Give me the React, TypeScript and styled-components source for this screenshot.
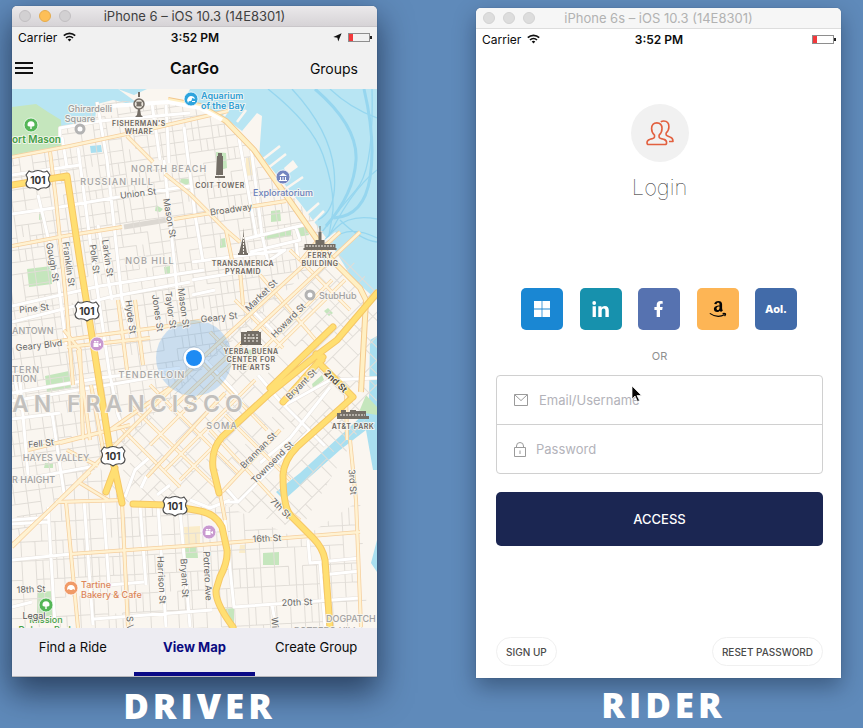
import React from 'react';
import styled, { createGlobalStyle, css } from 'styled-components';

const GlobalStyle = createGlobalStyle`
  * { box-sizing: border-box; }
  html { min-height: 100%; background: #5f8aba; }
  body { margin: 0; font-family: Inter, "Liberation Sans", sans-serif; color: #0c0c0c; }
  button, input { font-family: inherit; }
  button { cursor: pointer; }
`;

const Desktop = styled.main`
  display: grid;
  grid-template-columns: minmax(0, 1fr) minmax(0, 1fr);
  gap: 99px;
  min-height: 100vh;
  padding: 6px 22px 0 12px;
  overflow: hidden;
  background: #5f8aba;
`;

const Station = styled.section<{ $lowered?: boolean }>`
  display: flex;
  flex-direction: column;
  gap: ${(p) => (p.$lowered ? 8 : 10)}px;
  padding-top: ${(p) => (p.$lowered ? 2 : 0)}px;
`;

const Phone = styled.div<{ $active?: boolean }>`
  display: flex;
  flex-direction: column;
  border-radius: 5px 5px 0 0;
  background: ${(p) => (p.$active ? '#f1f1f1' : '#ffffff')};
  box-shadow: ${(p) =>
    p.$active
      ? '0 0 1px rgba(0, 0, 0, 0.5), 0 14px 32px 2px rgba(0, 10, 30, 0.55)'
      : '0 0 1px rgba(0, 0, 0, 0.4), 0 9px 22px rgba(0, 10, 30, 0.36)'};
`;

const TitleBar = styled.header<{ $active?: boolean }>`
  display: grid;
  grid-template-columns: 60px 1fr 60px;
  align-items: center;
  height: 21px;
  padding: 0 7px;
  border-radius: 5px 5px 0 0;
  font-size: 13px;
  border-bottom: 1px solid ${(p) => (p.$active ? '#c9c6c9' : '#dddddd')};
  background: ${(p) => (p.$active ? 'linear-gradient(#ebe9eb, #d6d3d6)' : '#f6f6f6')};
  color: ${(p) => (p.$active ? '#3f3f3f' : '#b2b2b2')};
`;

const Lights = styled.div`
  display: flex;
  gap: 8px;
`;

const Light = styled.span<{ $tone: string; $edge: string }>`
  width: 12px;
  height: 12px;
  border-radius: 50%;
  border: 1px solid ${(p) => p.$edge};
  background: ${(p) => p.$tone};
`;

const WindowTitle = styled.h2`
  margin: 0;
  font-size: inherit;
  font-weight: 400;
  text-align: center;
  white-space: nowrap;
`;

const StatusBar = styled.div`
  display: grid;
  grid-template-columns: 1fr auto 1fr;
  align-items: center;
  height: 20px;
  padding: 0 5px 0 6px;
  font-size: 12px;
`;

const StatusGroup = styled.div<{ $end?: boolean }>`
  display: flex;
  align-items: center;
  gap: 6px;
  justify-content: ${(p) => (p.$end ? 'flex-end' : 'flex-start')};
`;

const Clock = styled.strong`
  font-weight: 600;
`;

const NavBar = styled.nav`
  display: grid;
  grid-template-columns: 1fr auto 1fr;
  align-items: center;
  height: 42px;
`;

const AppTitle = styled.h1`
  margin: 0;
  font-size: 16px;
  font-weight: 600;
`;

const BareButton = styled.button<{ $end?: boolean }>`
  display: flex;
  justify-self: ${(p) => (p.$end ? 'end' : 'start')};
  padding: ${(p) => (p.$end ? '0 19px 0 0' : '0 0 0 3px')};
  border: 0;
  background: none;
  color: inherit;
  font-size: 14px;
`;

const MapSvg = styled.svg`
  display: block;
  width: 100%;
  aspect-ratio: 365 / 539;
  font-family: Inter, "Liberation Sans", sans-serif;
`;

const TabBar = styled.div`
  display: grid;
  grid-template-columns: repeat(3, 1fr);
  height: 49px;
  border-bottom: 1px solid #b8b8bd;
  background: #edecf2;
`;

const Tab = styled.button<{ $selected?: boolean }>`
  padding: 0 0 7px;
  border: 0;
  border-bottom: 4px solid transparent;
  background: none;
  font-size: 13px;
  color: #0c0c0c;
  white-space: nowrap;
  ${(p) =>
    p.$selected &&
    css`
      border-bottom-color: #0a0a86;
      color: #0a0a80;
      font-weight: 700;
    `}
`;

const Caption = styled.p`
  margin: 0;
  padding-left: 10px;
  font-family: "Open Sans", sans-serif;
  font-size: 35px;
  font-weight: 800;
  line-height: 38px;
  letter-spacing: 4px;
  text-align: center;
  color: #ffffff;
`;

const LoginForm = styled.form`
  display: flex;
  flex-direction: column;
  align-items: center;
  padding: 55px 18px 12px 20px;
`;

const Avatar = styled.div`
  display: grid;
  place-items: center;
  width: 58px;
  height: 58px;
  border-radius: 50%;
  background: #f1f1f1;
`;

const LoginTitle = styled.h1`
  margin: 10px 0 86px;
  font-size: 22px;
  font-weight: 100;
  line-height: 30px;
  color: #222222;
`;

const SocialRow = styled.div`
  display: flex;
  align-self: stretch;
  justify-content: space-between;
  padding: 0 26px 0 25px;
`;

const SocialButton = styled.button<{ $tone: string }>`
  display: grid;
  place-items: center;
  width: 42px;
  height: 42px;
  padding: 0;
  border: 0;
  border-radius: 5px;
  background: ${(p) => p.$tone};
  color: #ffffff;
  font-size: 11px;
  font-weight: 800;
`;

const Divider = styled.span`
  margin: 18px 0 11px;
  font-size: 11px;
  line-height: 16px;
  color: #8f8f8f;
`;

const Fields = styled.div`
  align-self: stretch;
  border: 1px solid #d0d0d0;
  border-radius: 4px;
`;

const Field = styled.label<{ $first?: boolean }>`
  position: relative;
  display: flex;
  align-items: center;
  gap: ${(p) => (p.$first ? 11 : 10)}px;
  height: 48px;
  padding: 0 17px;
  color: #9b9b9b;
  ${(p) =>
    p.$first &&
    css`
      height: 49px;
      border-bottom: 1px solid #d0d0d0;
    `}
`;

const TextInput = styled.input`
  flex: 1;
  min-width: 0;
  padding: 0;
  border: 0;
  outline: 0;
  background: none;
  font-size: 13px;
  color: #333333;
  &::placeholder { color: #b3b3ba; opacity: 1; }
`;

const Pointer = styled.svg`
  position: absolute;
  top: 9px;
  left: 134px;
`;

const AccessButton = styled.button`
  align-self: stretch;
  height: 54px;
  margin: 18px 0 91px;
  border: 0;
  border-radius: 5px;
  background: #1b2652;
  color: #ffffff;
  font-size: 13px;
  font-weight: 500;
`;

const Footer = styled.footer`
  display: flex;
  align-self: stretch;
  justify-content: space-between;
`;

const Pill = styled.button`
  height: 29px;
  padding: 0 9px;
  border: 1px solid #f0f0f0;
  border-radius: 15px;
  background: #ffffff;
  color: #4a4a4a;
  font-size: 10px;
  font-weight: 500;
`;

/* ---------- small icons ---------- */

const WifiIcon = () => (
  <svg width="13" height="10" viewBox="0 0 13 10" fill="none" stroke="#111" strokeWidth="1.6" aria-hidden="true">
    <path d="M.8 3.7a8.2 8.2 0 0 1 11.4 0M3 6a5 5 0 0 1 7 0" />
    <path d="M4.7 7.6a2.6 2.6 0 0 1 3.6 0L6.5 9.6z" fill="#111" stroke="none" />
  </svg>
);

const LocationIcon = () => (
  <svg width="9" height="9" viewBox="0 0 9 9" aria-hidden="true">
    <path d="M8.6.3 5.2 8.6 4.4 4.7.3 3.9z" fill="#111" />
  </svg>
);

const BatteryIcon = () => (
  <svg width="24" height="9" viewBox="0 0 24 9" aria-hidden="true">
    <rect x=".5" y=".5" width="21" height="8" fill="none" stroke="#8e8e8e" />
    <rect x="1" y="1" width="4" height="7" fill="#f2383b" />
    <rect x="22" y="3" width="2" height="3" fill="#222" />
  </svg>
);

const MenuIcon = () => (
  <svg width="18" height="12" viewBox="0 0 18 12" aria-hidden="true">
    <path d="M0 1h18M0 6h18M0 11h18" stroke="#111" strokeWidth="2" />
  </svg>
);

const PeopleIcon = () => (
  <svg width="28" height="26" viewBox="0 0 28 26" fill="none" stroke="#e2603f" strokeWidth="1.600" strokeLinejoin="round" aria-hidden="true">
    <path d="M8.500 17v-1.800C6.400 13.500 5.600 11.200 5.600 8.600c0-3.700 2-5.700 5.200-5.700S16 4.900 16 8.600c0 2.600-.8 4.900-2.900 6.600V17c0 1.300 1.900 1.700 4.800 2.400 1.900.5 2.700 1.500 2.700 3.300 0 1.300-.5 1.800-1.600 1.800H2.600c-1.100 0-1.600-.5-1.600-1.800 0-1.800.8-2.800 2.700-3.300 2.900-.7 4.800-1.100 4.800-2.400z" />
    <path d="M14.800 1.900c.8-.6 1.800-.9 2.900-.9 3.200 0 5.200 2 5.200 5.700 0 2.600-.8 4.600-2.800 6.300v1.500c0 1.300 1.600 1.800 3.900 2.500 2.200.6 3 1.600 3 4.500H23" />
  </svg>
);

const WindowsIcon = () => (
  <svg width="16" height="16" viewBox="0 0 16 16" fill="#fff" aria-hidden="true">
    <path d="M0 0h7.600v7.600H0zM8.400 0H16v7.600H8.400zM0 8.400h7.600V16H0zM8.400 8.400H16V16H8.400z" />
  </svg>
);

const LinkedInIcon = () => (
  <svg width="17" height="16" viewBox="0 0 17 16" fill="#fff" aria-hidden="true">
    <circle cx="2.200" cy="2" r="1.900" />
    <path d="M.6 5.200h3.300V16H.6zM6.300 5.200h3.200v1.500c.6-1.100 1.800-1.800 3.300-1.800 2.900 0 4 1.800 4 4.700V16h-3.400v-5.700c0-1.600-.3-2.700-1.700-2.700-1.500 0-2 1.100-2 2.700V16H6.300z" />
  </svg>
);

const FacebookIcon = () => (
  <svg width="10" height="16" viewBox="0 0 10 16" fill="#fff" aria-hidden="true">
    <path d="M2.700 16V8.900H.4V6h2.300V4.100C2.700 1.500 4.200.1 6.500.1c1.100 0 2.200.2 2.200.2v2.500H7.500c-1.200 0-1.500.7-1.500 1.500V6h2.700l-.5 2.900H6V16z" />
  </svg>
);

const AmazonIcon = () => (
  <svg width="18" height="18" viewBox="0 0 18 18" aria-hidden="true">
    <path d="M10.500 4.500c0-1.100-.3-1.700-1.300-1.700-.9 0-1.400.5-1.600 1.400L5.200 3.900C5.600 1.800 7.200.9 9.400.9c2.300 0 3.700 1.100 3.700 3.400v4c0 .9.200 1.400.8 2.100L12 12c-.5-.4-.8-.8-1-1.300-.8.9-1.700 1.400-2.900 1.400-1.900 0-3.200-1.100-3.200-3 0-2.700 2.500-3.600 5.600-3.700zm0 1.900c-1.800 0-3 .5-3 2.200 0 .9.500 1.500 1.300 1.500 1.200 0 1.700-1.100 1.700-2.600z" fill="#050505" />
    <path d="M.8 13.400c4.800 3.400 10.600 3.600 15 1.200M13.600 13.600c1.200-.3 2.400-.3 2.900.1.300.5-.2 1.600-.9 2.400" fill="none" stroke="#050505" strokeWidth="1.100" />
  </svg>
);

const MailIcon = () => (
  <svg width="14" height="12" viewBox="0 0 14 12" fill="none" stroke="currentColor" aria-hidden="true">
    <path d="M.5.500h13v11H.5zM.8.800 7 6.600 13.200.8" />
  </svg>
);

const LockIcon = () => (
  <svg width="12" height="15" viewBox="0 0 12 15" fill="none" stroke="currentColor" aria-hidden="true">
    <path d="M.5 5.500h11v9H.5zM2.500 5.500V4a3.500 3.500 0 0 1 7 0v1.500M6 8.500V12" />
  </svg>
);

/* ---------- map ---------- */

function grid(x0: number, y0: number, x1: number, y1: number, dx: number, dy: number, seed: number) {
  const out: string[] = [];
  const chance = (i: number, j: number) => {
    const v = Math.sin(i * 127.1 + j * 311.7 + seed * 74.7) * 43758.5453;
    return v - Math.floor(v);
  };
  for (let x = x0, i = 0; x < x1; x += dx, i++) {
    for (let y = y0, j = 0; y < y1; y += dy, j++) {
      if (chance(i, j) > 0.12) out.push(`M${x} ${y}v${dy}`);
      if (chance(j + 50, i) > 0.12) out.push(`M${x} ${y}h${dx}`);
      if (chance(i + 9, j + 31) > 0.72) out.push(`M${x + dx / 2} ${y}v${dy}`);
    }
  }
  return out.join('');
}

const northGrid = grid(-90, 40, 440, 620, 13, 12, 1);
const somaGrid = grid(-260, -240, 260, 260, 19, 17, 2);
const missionGrid = grid(-20, 420, 400, 660, 14, 19, 3);

const whiteRoads =
  'M12 175 80 165M12 214 60 207 130 195 190 186M60 137 60 128 100 121 190 113M62 137 67 168M97 102 107 160 122 300 131 330' +
  'M152 104 160 160M166 105 169 163M184 127 195 215 203 262M78 148 90 240 109 370 118 415 126 433M38 195 58 280 66 344' +
  'M98 225 112 300M164 160 178 300M12 306 100 286 204 270M12 322 110 297 190 282M12 393 100 378 180 368M12 401 120 383 165 375' +
  'M12 419 60 413M20 380 28 475M52 413 64 493M30 478 90 467M12 524 48 522M48 507 55 625M12 560 71 554M84 500 93 625M103 500 109 585' +
  'M94 619 212 610M109 585 144 582M140 505 146 585M158 505 166 627M180 510 190 627M238 133 256 235M251 147 262 235 268 262' +
  'M245 239 308 224M250 252 300 240 296 228M296 240 298 260M192 262 285 250 270 260M192 280 240 272M192 295 215 290' +
  'M125 497 135 470 150 457M141 488 147 475 163 462M157 495 170 485M190 500 210 508 230 500M223 502 238 502 310 430M223 502 234 607 360 598' +
  'M225 487 238 502M308 540 310 563 360 558M320 563 325 627M322 575 360 571M272 605 276 627M12 520 50 517M15 380 21 410' +
  'M258 375 280 401 325 446M250 308 275 333M205 360 236 393 250 414M285 405 330 380 377 378M260 463 290 438 330 387M12 607 32 602';

const creamRoads =
  'M12 157 70 146 150 129 228 111M127 136 153 162M165 174 190 194 226 230 240 242M12 246 65 236 122 227M174 219 205 214 286 201' +
  'M50 152 56 200 66 300 73 385M46 343 100 335 162 327 205 320M64 330 80 350 83 440M118 300 127 370M135 300 143 365' +
  'M67 347 150 338M78 350 90 440M28 450 110 430 170 388M60 443 130 425M91 385 105 460M56 502 125 500M66 502 78 628' +
  'M122 503 128 627M71 554 200 545 360 532M80 483 108 500M67 450 98 466M350 440 356 500 361 627M220 493 225 520' +
  'M346 395 347 440M226 230 232 260M240 270 243 305M300 262 318 240';

const marketRoads = 'M12 547 97 463 200 360 340 232M12 545 90 472M222 492 280 430M170 410 360 232M147 477 225 393';

const diagonals =
  'M150 385 240 475M130 405 222 493M118 425 180 487M190 350 267 430M210 332 245 367M235 300 283 348M260 275 320 345M290 250 350 310' +
  'M210 430 275 500 300 520M225 415 290 480M150 445 235 360M165 470 255 380M180 480 215 445M245 367 332 280M272 352 345 280';

const highways =
  'M12 185 67 176 80 262 88 311 110 450 115 470 122 503M115 468 106 492M133 504 167 505 200 511Q216 514 222 527L227 550Q228 562 220 577L216 590Q215 603 233 627' +
  'M377 293 337 340 317 355 270 393 222 437Q211 449 213 468L219 493M333 327 270 388M353 397 297 447Q284 460 283 475 283 507 291 516L313 538Q323 548 325 560L330 628' +
  'M318 362 353 397M283 402 323 357M316 354 322 360';

type LabelProps = {
  x: number;
  y: number;
  turn?: number;
  size?: number;
  tone?: string;
  weight?: number;
  track?: number;
  anchor?: 'start' | 'middle' | 'end';
  children: React.ReactNode;
};

const Label = ({ x, y, turn = 0, size = 9, tone = '#666666', weight = 400, track = 0, anchor = 'middle', children }: LabelProps) => (
  <text
    x={x}
    y={y}
    transform={turn ? `rotate(${turn} ${x} ${y})` : undefined}
    dominantBaseline="central"
    textAnchor={anchor}
    fontSize={size}
    fontWeight={weight}
    letterSpacing={track}
    fill={tone}
    stroke="#faf7f1"
    strokeOpacity="0.85"
    strokeWidth="2"
    strokeLinejoin="round"
    paintOrder="stroke"
  >
    {children}
  </text>
);

const District = (p: LabelProps) => <Label size={9} tone="#a3a3a3" weight={500} track={1} {...p} />;
const Landmark = (p: LabelProps) => <Label size={7} tone="#6c665f" weight={600} track={0.5} {...p} />;
const Place = (p: LabelProps) => <Label weight={500} {...p} />;

const Shield = ({ x, y }: { x: number; y: number }) => (
  <g transform={`translate(${x} ${y})`}>
    <path
      d="M-9-9Q-6-7-3-9 0-10 3-9 6-7 9-9L12-5Q9-1 12 3 12 7 8 8 4 7 0 10-4 7-8 8-12 7-12 3-9-1-12-5z"
      fill="#fff"
      stroke="#4b4b4b"
      strokeWidth="1.200"
      strokeLinejoin="round"
    />
    <text textAnchor="middle" dominantBaseline="central" fontSize="10" fontWeight="700" fill="#333">
      101
    </text>
  </g>
);

const Spot = ({ x, y, tone, children }: { x: number; y: number; tone: string; children?: React.ReactNode }) => (
  <g transform={`translate(${x} ${y})`}>
    <circle r="7" fill={tone} stroke="#fff" strokeWidth=".8" />
    {children}
  </g>
);

const Camera = () => <path d="M-3.500-1h5v4h-5zM2 0l2-1v3L2 1zM-3-3h2v1.500h-2zM-.5-3h2v1.500h-2z" fill="#fff" />;
const Tree = () => <path d="M-.7 4V1.500Q-4 2-3.500-.5-3.500-3.500 0-3.800 3.500-3.500 3.500-.5 4 2 .7 1.500V4z" fill="#fff" />;

const CityMap = () => (
  <MapSvg viewBox="12 89 365 539" preserveAspectRatio="xMidYMid slice" role="img" aria-label="Map of San Francisco">
    <defs>
      <clipPath id="north"><path d="M12 155 62 145 62 128 110 100 200 106 228 118 270 170 335 245 12 547z" /></clipPath>
      <clipPath id="soma"><path d="M97 463 335 238 377 292V400L300 530 225 505 122 502z" /></clipPath>
      <clipPath id="mission"><path d="M12 547 97 463 122 502 225 505 300 540 360 500 368 628H12z" /></clipPath>
    </defs>
    <rect x="12" y="89" width="365" height="539" fill="#faf6f0" />

    <path d="M12 89V128H60L76 124 95 119 97 104 113 100 134 105 147 96 168 102 190 101 222 116 246 134 262 157 300 203 333 247 352 278 377 300V89z" fill="#b8e5f3" />
    <path d="M377 336 370 340 369 402 377 420zM377 395 366 412 352 425 300 473 276 492 284 500 340 450 366 430 373 470 377 470zM377 540 371 563 377 572z" fill="#a9dff0" />
    <g fill="none" stroke="#96d6ef" strokeWidth="1.300">
      <path d="M268 89Q312 124 323 155T333 210Q328 245 322 270" />
      <path d="M292 89Q330 130 334 170T318 220" />
      <path d="M315 89Q358 126 356 160T326 226" strokeWidth="3" />
      <path d="M330 89Q350 108 377 118M372 89Q374 170 356 190T322 232" />
      <path d="M364 89Q376 140 370 178T334 218" strokeWidth="3" />
      <path d="M377 219Q350 214 336 228T326 240M377 238Q348 224 332 240M322 250Q350 190 377 170M340 220Q360 240 377 242" />
    </g>
    <g fill="#faf6f0">
      <path d="M242 131 257 113 262 116 259 158zM284 168 293 160 298 167 287 175z" />
      <path d="M118 89 134 95 147 89H190L184 100 136 102z" />
    </g>
    <path d="M224 116 232 104M237 122 246 110M262 160 280 146M268 168 286 154M284 190 303 177M303 217 319 203M310 225 324 211M319 246 336 233" stroke="#faf6f0" strokeWidth="2.500" />

    <g fill="#c5e6bd">
      <path d="M12 107 36 104 48 112 61 120 62 148 12 156z" />
      <path d="M27 269 51 266 52 284 29 287zM45 376 69 371 71 388 47 392zM216 152 226 153 227 168 217 171zM271 211 280 210 281 221 271 222z" />
      <path d="M181 178 190 179 188 186 180 182zM156 205 163 209 160 212 155 211zM39 214 44 213 44 219 39 220zM220 239 225 238 226 247 220 248z" />
      <path d="M265 234 291 229 291 236 265 240zM296 228 306 226 309 235 297 237zM164 267 170 266 170 274 165 274z" />
      <path d="M37 592 53 591 54 616 37 616zM45 463 53 463 53 468 44 468zM184 547 197 546 198 558 185 558zM263 553 279 552 279 565 263 565zM223 609 234 608 234 625z" />
      <path d="M245 350 262 349 256 357 246 356zM366 395 377 407 377 415 359 412zM312 384 322 375 324 380 313 388zM324 311 328 308 333 313 329 316z" />
    </g>
    <path d="M90 146 101 145 102 152 91 153z" fill="#a9dff0" />
    <path d="M184 527 200 526 200 546 185 547zM240 545 246 545 246 553 239 553zM246 158 252 157 253 175 246 176z" fill="#faecc9" />
    <path d="M124 227 167 220" stroke="#dcd8d2" strokeWidth="5" />

    <g fill="none" stroke="#e1ddd7" strokeWidth="1">
      <g clipPath="url(#north)"><path d={northGrid} transform="rotate(-8 150 300)" /></g>
      <g clipPath="url(#soma)"><path d={somaGrid} transform="translate(240 380) rotate(-45)" /></g>
      <g clipPath="url(#mission)"><path d={missionGrid} transform="rotate(-3 180 560)" /></g>
    </g>

    <g fill="none" strokeLinejoin="round">
      <g stroke="#e7e2dc" strokeWidth="4"><path d={whiteRoads} /></g>
      <path d={whiteRoads} stroke="#ffffff" strokeWidth="3" />
      <path d={diagonals} stroke="#f8d6a4" strokeWidth="3.500" />
      <path d={diagonals} stroke="#fff5df" strokeWidth="2" />
      <path d={creamRoads} stroke="#f6cf9d" strokeWidth="4" />
      <path d={marketRoads} stroke="#f6cf9d" strokeWidth="4" />
      <path d={creamRoads} stroke="#fff2d2" strokeWidth="2.500" />
      <path d={marketRoads} stroke="#fff2d2" strokeWidth="2.500" />
      <path d="M168 100 200 106 226 121 254 150 290 201 330 258 360 288 366 300 361 392" stroke="#f3c88e" strokeWidth="6" />
      <path d="M168 100 200 106 226 121 254 150 290 201 330 258 360 288 366 300 361 392" stroke="#fff0c4" strokeWidth="4" />
      <path d="M112 106 168 102 200 108 222 120" stroke="#fff" strokeWidth="4" />
      <g strokeLinecap="round">
        <path d={highways} stroke="#f6c765" strokeWidth="7" />
        <path d={highways} stroke="#ffdf72" strokeWidth="5" />
      </g>
    </g>

    <Label x={12} y={404} anchor="start" size={23} track={5} weight={600} tone="#c2c0bd">AN FRANCISCO</Label>

    <circle cx="194" cy="358" r="38" fill="#4b9bea" fillOpacity=".27" />

    <District x={169} y={168}>NORTH BEACH</District>
    <District x={117} y={181}>RUSSIAN HILL</District>
    <District x={150} y={260}>NOB HILL</District>
    <District x={12} y={330} anchor="start" track={0}>ANTOWN</District>
    <District x={12} y={369} anchor="start">TERN</District>
    <District x={12} y={378} anchor="start" track={0}>ITION</District>
    <District x={152} y={374}>TENDERLOIN</District>
    <District x={222} y={425}>SOMA</District>
    <District x={56} y={457} track={0}>HAYES VALLEY</District>
    <District x={12} y={479} anchor="start" track={0}>R HAIGHT</District>
    <District x={326} y={618} anchor="start" track={0}>DOGPATCH</District>
    <District x={326} y={630} track={0}>POTRERO HILL</District>

    <Label x={138} y={193} turn={-7}>Union St</Label>
    <Label x={170} y={218} turn={80}>Mason St</Label>
    <Label x={53} y={262} turn={80}>Gough St</Label>
    <Label x={69} y={264} turn={82}>Franklin St</Label>
    <Label x={95} y={259} turn={82}>Polk St</Label>
    <Label x={108} y={258} turn={82}>Larkin St</Label>
    <Label x={231} y={209} turn={-8}>Broadway</Label>
    <Label x={131} y={317} turn={82}>Hyde St</Label>
    <Label x={158} y={313} turn={82}>Jones St</Label>
    <Label x={171} y={310} turn={82}>Taylor St</Label>
    <Label x={184} y={308} turn={82}>Mason St</Label>
    <Label x={34} y={308} turn={-6}>Pine St</Label>
    <Label x={39} y={345} turn={-6}>Geary Blvd</Label>
    <Label x={219} y={317} turn={-6}>Geary St</Label>
    <Label x={261} y={295} turn={-45}>Market St</Label>
    <Label x={288} y={320} turn={-45}>Howard St</Label>
    <Label x={301} y={384} turn={-45}>Bryant St</Label>
    <Label x={336} y={381} turn={44} weight={600} tone="#4f4a40">2nd St</Label>
    <Label x={258} y={450} turn={-45}>Brannan St</Label>
    <Label x={272} y={462} turn={-45}>Townsend St</Label>
    <Label x={281} y={508} turn={45}>7th St</Label>
    <Label x={353} y={482} turn={86}>3rd St</Label>
    <Label x={41} y={443} turn={-6}>Fell St</Label>
    <Label x={31} y={589} turn={-2}>18th St</Label>
    <Label x={267} y={538} turn={-3}>16th St</Label>
    <Label x={297} y={602} turn={-2}>20th St</Label>
    <Label x={162} y={580} turn={87}>Harrison St</Label>
    <Label x={185} y={578} turn={87}>Bryant St</Label>
    <Label x={208} y={576} turn={87}>Potrero Ave</Label>
    <Label x={130} y={616} turn={87} anchor="start">S V</Label>
    <Label x={275} y={617} turn={87} anchor="start">Wi</Label>

    <Place x={90} y={108} tone="#9a9a9a">Ghirardelli</Place>
    <Place x={80} y={118} tone="#9a9a9a">Square</Place>
    <Place x={12} y={139} anchor="start" size={10} tone="#45a047" weight={600}>ort Mason</Place>
    <Place x={201} y={95} anchor="start" tone="#2f9fd6" weight={600}>Aquarium</Place>
    <Place x={201} y={105} anchor="start" tone="#2f9fd6" weight={600}>of the Bay</Place>
    <Place x={283} y={192} tone="#6a80ba">Exploratorium</Place>
    <Place x={319} y={295} anchor="start" tone="#a1a1a1">StubHub</Place>
    <Place x={81} y={584} anchor="start" tone="#dc865a">Tartine</Place>
    <Place x={81} y={594} anchor="start" tone="#dc865a">Bakery &amp; Cafe</Place>
    <Place x={46} y={619} tone="#45a047">Mission</Place>
    <Place x={46} y={629} tone="#45a047">Dolores Park</Place>
    <Label x={34} y={615} tone="#555555">Legal</Label>

    <Landmark x={139} y={123}>FISHERMAN'S</Landmark>
    <Landmark x={139} y={131}>WHARF</Landmark>
    <Landmark x={220} y={185}>COIT TOWER</Landmark>
    <Landmark x={243} y={263}>TRANSAMERICA</Landmark>
    <Landmark x={243} y={271}>PYRAMID</Landmark>
    <Landmark x={320} y={255}>FERRY</Landmark>
    <Landmark x={320} y={263}>BUILDING</Landmark>
    <Landmark x={251} y={351}>YERBA BUENA</Landmark>
    <Landmark x={251} y={359}>CENTER FOR</Landmark>
    <Landmark x={251} y={367}>THE ARTS</Landmark>
    <Landmark x={353} y={426}>AT&amp;T PARK</Landmark>

    <g fill="#746e66">
      <path d="M138 92h2v5h-2zM138 109h2l1 6 2 2h-8l2-2z" />
      <circle cx="139" cy="104" r="5" fill="#e9e4db" stroke="#746e66" strokeWidth="1.500" />
      <path d="M137 102h4v4h-4zM135 101l8 6M143 101l-8 6" stroke="#746e66" strokeWidth=".7" />
      <path d="M217 156h1v-3h4v3h1v19h-7z" />
      <path d="M215 176h10v2h-10zM243 237l.500-9 .500 9 3 16h1v2h-10v-2h1z" />
      <path d="M319.500 226h1v6h1v8h3v4h11v4h1v2h-33v-2h1v-4h11v-4h3v-8h1z" />
      <path d="M241 332h6v-1h12v1h2v12h-20zM240 344h22v1h-22z" />
      <path d="M337 413h4v-3h5v2h4v-2h6v1h10v5h3v3h-32z" />
    </g>
    <path d="M245 334v9M249 334v9M253 334v9M257 334v9M244 338h15M306 246h28M340 415h25M243.500 237v18" stroke="#f6f2eb" strokeWidth="1" strokeDasharray="2 1" />

    <Spot x={31} y={125} tone="#54b657"><Tree /></Spot>
    <Spot x={46} y={605} tone="#54b657"><Tree /></Spot>
    <Spot x={191} y={99} tone="#2da4dd">
      <path d="M-4 1Q-2-5 3-2L4 0 1-1Q1 3-2 2l-1 2zM1 2h3v1H1z" fill="#fff" />
    </Spot>
    <Spot x={283} y={177} tone="#7485bf">
      <path d="M-4-1 0-4 4-1zM-3 0h1v3h-1zM-.5 0h1v3h-1zM2 0h1v3H2zM-4 3h8v1h-8z" fill="#fff" />
    </Spot>
    <Spot x={97} y={344} tone="#c99ad0"><Camera /></Spot>
    <Spot x={209} y={532} tone="#c99ad0"><Camera /></Spot>
    <Spot x={71} y={588} tone="#f09a67"><path d="M-4 2Q-4-3 0-3T4 2L2 1 1 2H-1L-2 1z" fill="#fff" /></Spot>
    <circle cx="80" cy="129" r="4" fill="#fff" stroke="#b3b3b3" strokeWidth="3" />
    <circle cx="310" cy="295" r="4" fill="#fff" stroke="#b3b3b3" strokeWidth="3" />

    <Shield x={38} y={180} />
    <Shield x={87} y={311} />
    <Shield x={113} y={456} />
    <Shield x={175} y={506} />

    <circle cx="194" cy="358" r="11" fill="#fff" stroke="#7c9dc0" strokeOpacity=".5" strokeWidth="1" />
    <circle cx="194" cy="358" r="8" fill="#1e8bf3" />
  </MapSvg>
);

const WindowChrome = ({ title, active }: { title: string; active?: boolean }) => (
  <TitleBar $active={active}>
    <Lights>
      <Light $tone={active ? '#d2d0d2' : '#dddddd'} $edge={active ? '#c2bfc2' : '#d3d3d3'} />
      <Light $tone={active ? '#fdbf57' : '#dddddd'} $edge={active ? '#e5ab4c' : '#d3d3d3'} />
      <Light $tone={active ? '#d2d0d2' : '#dddddd'} $edge={active ? '#c2bfc2' : '#d3d3d3'} />
    </Lights>
    <WindowTitle>{title}</WindowTitle>
  </TitleBar>
);

const PhoneStatus = ({ located }: { located?: boolean }) => (
  <StatusBar>
    <StatusGroup>
      Carrier <WifiIcon />
    </StatusGroup>
    <Clock>3:52 PM</Clock>
    <StatusGroup $end>
      {located && <LocationIcon />}
      <BatteryIcon />
    </StatusGroup>
  </StatusBar>
);

export default function App() {
  return (
    <>
      <GlobalStyle />
      <Desktop>
        <Station>
          <Phone $active>
            <WindowChrome title="iPhone 6 – iOS 10.3 (14E8301)" active />
            <PhoneStatus located />
            <NavBar>
              <BareButton type="button" aria-label="Menu"><MenuIcon /></BareButton>
              <AppTitle>CarGo</AppTitle>
              <BareButton type="button" $end>Groups</BareButton>
            </NavBar>
            <CityMap />
            <TabBar>
              <Tab type="button">Find a Ride</Tab>
              <Tab type="button" $selected>View Map</Tab>
              <Tab type="button">Create Group</Tab>
            </TabBar>
          </Phone>
          <Caption>DRIVER</Caption>
        </Station>

        <Station $lowered>
          <Phone>
            <WindowChrome title="iPhone 6s – iOS 10.3 (14E8301)" />
            <PhoneStatus />
            <LoginForm onSubmit={(e) => e.preventDefault()}>
              <Avatar><PeopleIcon /></Avatar>
              <LoginTitle>Login</LoginTitle>
              <SocialRow>
                <SocialButton type="button" $tone="#1a87d3" aria-label="Windows"><WindowsIcon /></SocialButton>
                <SocialButton type="button" $tone="#1791ad" aria-label="LinkedIn"><LinkedInIcon /></SocialButton>
                <SocialButton type="button" $tone="#5672b0" aria-label="Facebook"><FacebookIcon /></SocialButton>
                <SocialButton type="button" $tone="#fdb555" aria-label="Amazon"><AmazonIcon /></SocialButton>
                <SocialButton type="button" $tone="#426ba9">Aol.</SocialButton>
              </SocialRow>
              <Divider>OR</Divider>
              <Fields>
                <Field $first>
                  <MailIcon />
                  <TextInput type="text" placeholder="Email/Username" aria-label="Email/Username" />
                  <Pointer width="12" height="18" viewBox="0 0 12 18" aria-hidden="true">
                    <path d="M1 1v13l3-3 2.500 5.500 2-1L6 10.500h4.500z" fill="#050505" stroke="#fff" strokeWidth=".7" />
                  </Pointer>
                </Field>
                <Field>
                  <LockIcon />
                  <TextInput type="password" placeholder="Password" aria-label="Password" />
                </Field>
              </Fields>
              <AccessButton type="submit">ACCESS</AccessButton>
              <Footer>
                <Pill type="button">SIGN UP</Pill>
                <Pill type="button">RESET PASSWORD</Pill>
              </Footer>
            </LoginForm>
          </Phone>
          <Caption>RIDER</Caption>
        </Station>
      </Desktop>
    </>
  );
}
